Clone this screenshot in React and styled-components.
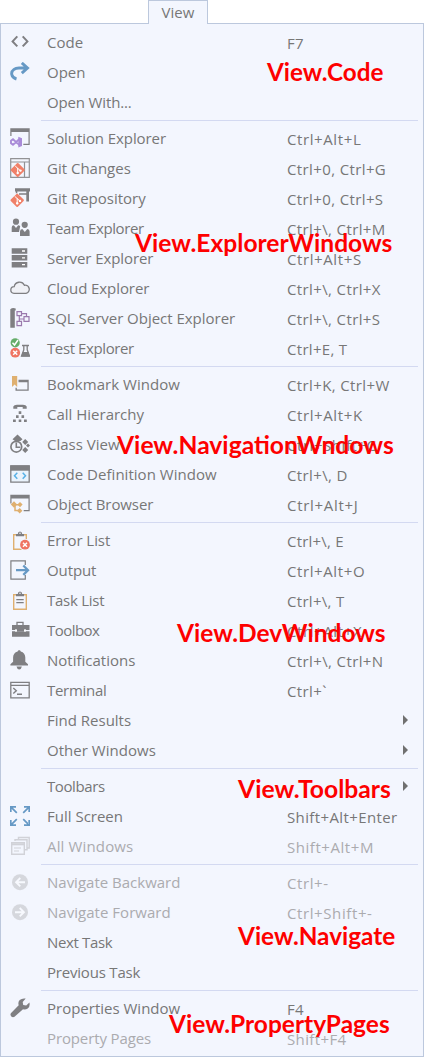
import React from 'react';
import styled, { createGlobalStyle } from 'styled-components';

const Global = createGlobalStyle`
  * { box-sizing: border-box; }
  body { margin: 0; background: #fff; }
`;

const Page = styled.div`
  position: relative;
  width: 424px;
  height: 1057px;
  display: flex;
  flex-direction: column;
  font-family: 'Open Sans', 'Noto Sans', sans-serif;
  font-size: 15px;
  color: #777;
`;

const Tab = styled.div`
  position: relative;
  z-index: 1;
  width: 60px;
  height: 24px;
  margin-left: 148px;
  border: 1px solid #bcc8dd;
  border-bottom: 0;
  background: #f3f6fe;
  line-height: 23px;
  text-align: center;
  flex: none;
`;

const Menu = styled.div`
  flex: 1;
  margin-top: -1px;
  padding: 4px 5px 0 0;
  border: 1px solid #bcc8dd;
  background: #f3f6fe;
`;

const Row = styled.div`
  display: grid;
  grid-template-columns: 46px 240px 1fr 15px;
  height: 30px;
  color: ${(p) => (p.$disabled ? '#ababaf' : '#777')};
`;

const IconCell = styled.span`
  padding: 4px 0 0 9px;
  svg { display: block; opacity: ${(p) => (p.$disabled ? 0.8 : 1)}; }
`;

const Name = styled.span`
  line-height: 29px;
  white-space: nowrap;
  letter-spacing: ${(p) => p.$ls}px;
`;

const Keys = styled.span`
  line-height: 31px;
  white-space: nowrap;
  letter-spacing: ${(p) => p.$ls}px;
`;

const Arrow = styled.i`
  align-self: center;
  margin-top: -2px;
  border: 5px solid transparent;
  border-left: 5px solid #707070;
  border-right: 0;
  width: 0;
`;

const Divider = styled.div`
  height: 1px;
  margin: 2px 0 3px 40px;
  background: #d3d9f1;
`;

const Caption = styled.span`
  position: absolute;
  left: ${(p) => p.$x}px;
  top: ${(p) => p.$base - 24}px;
  font: bold 24.5px/30px Lato, sans-serif;
  color: #fe0000;
  white-space: nowrap;
  transform-origin: 0 0;
  transform: scaleX(${(p) => p.$sx});
`;

const G = '#7f7f82';
const B = '#6699c5';
const O = '#dfb070';
const R = '#ef7463';
const V = '#a98bd8';

const gitMark = (x, y, r) => (
  <g>
    <rect x={x - r * 0.72} y={y - r * 0.72} width={r * 1.44} height={r * 1.44} rx="1" fill="#f08069" transform={`rotate(45 ${x} ${y})`} />
    <path d={`M${x - 2.5} ${y - 4}L${x + 3} ${y + 1}M${x} ${y - 2}V${y + 4}`} stroke="#fff" strokeWidth="1" fill="none" />
    <circle cx={x} cy={y + 3} r="1.2" fill="#fff" />
    <circle cx={x + 2.8} cy={y + 0.6} r="1.2" fill="#fff" />
  </g>
);
const errorMark = (x, y) => (
  <g>
    <circle cx={x} cy={y} r="4.9" fill={R} />
    <path d={`M${x - 2} ${y - 2}l4 4m0 -4l-4 4`} stroke="#fff" strokeWidth="1.5" />
  </g>
);
const clipboard = (
  <g>
    <path d="M3.7 4.7h12.6v14.6H3.7z" fill="none" stroke={O} strokeWidth="1.4" />
    <path d="M6 6.3V4h1.8a2.2 2.6 0 0 1 4.4 0H14v2.3z" fill={G} />
    <circle cx="10" cy="3.2" r=".8" fill="#f3f6fe" />
  </g>
);

const icons = {
  code: <path d="M7.3 4.4L2.6 9.4l4.7 5M12.7 4.4l4.7 5-4.7 5" fill="none" stroke={G} strokeWidth="2" />,
  open: <path d="M6.5 17C.8 15.300.4 10 4 7.400 5.400 6.300 7 6 9 6h8.500M11.800 .9l5.700 5.100-5.700 5.100" fill="none" stroke={B} strokeWidth="2.900" />,
  solution: (
    <g>
      <path d="M.3 .3h19.400v3.700H.3zM.3 4h1.200v4H.3zM18.500 4h1.200v13h-6.400v-1.200h5.200z" fill={G} />
      <path d="M9.500 11L3 16.800 1 15.200v-2.500l2-1.400 6.500 5.800" fill="none" stroke={V} strokeWidth="1.900" />
      <path d="M8.300 8.700l3.700 1.500v7.800l-3.700 1.500z" fill={V} />
    </g>
  ),
  gitChanges: (
    <g>
      <path d="M.7 .7h18.600v18.600H.7zM.7 4h18.600M14.500 4v15" fill="none" stroke="#929295" strokeWidth="1.200" />
      {gitMark(7.7, 12, 7.3)}
    </g>
  ),
  gitRepo: (
    <g>
      <path d="M5 .3h15v3.200H5zM16.300 3.500h2.700v10h-2.700zM5.800 3.500h1.500v1.700H5.800zM9 5.300h8v1.500H9z" fill={G} />
      {gitMark(7.2, 12.3, 7)}
    </g>
  ),
  team: (
    <g fill={G}>
      <circle cx="6" cy="3.700" r="3.100" />
      <path d="M1.700 14V9.500Q1.700 7.300 3.800 7.300L6 10l2.200-2.700q1.300 0 2 1L9 14z" />
      <circle cx="14.700" cy="6.800" r="3.100" />
      <path d="M10 18v-4.500q0-2.500 2.300-2.500l2.500 3 2.500-3q2.300 0 2.300 2.500V18z" />
    </g>
  ),
  server: (
    <g>
      <path d="M1.700 .3h15.600v5.500H1.700zM1.700 7.100h15.600v5.500H1.700zM1.700 13.900h15.600v5.500H1.700z" fill={G} />
      <path d="M12 3h3M12 9.900h3M12 16.700h3" stroke="#fff" strokeWidth="1.300" />
    </g>
  ),
  cloud: <path d="M4 15.300a3.300 3.300 0 0 1 .2-6.600A5.400 5.400 0 0 1 14.400 7.300 4 4 0 0 1 16 15.300z" fill="#f0f1f6" stroke={G} strokeWidth="1.300" />,
  sql: (
    <g>
      <path d="M.3 1.300Q2.500-.8 5.700 .5V2.500H4.800V19.700H.3z" fill={G} />
      <path d="M7 3.700h4.500v4H7zM14 8.700h5v4.600h-5zM7 13.300h4.500v4.400H7zM11.500 5.700h5v3M14 11H9.300V7.700M9.300 11v2.300" fill="none" stroke="#9b7aad" strokeWidth="1.200" />
    </g>
  ),
  test: (
    <g>
      <circle cx="5.200" cy="4.800" r="4.600" fill="#65ad6a" />
      <path d="M2.500 4.800l2 2.200 3.500-5" fill="none" stroke="#fff" strokeWidth="1.500" />
      {errorMark(5.200, 14.700)}
      <path d="M12 7.500h7M13.800 7.500v4.300L11.500 18h8L17.200 11.800V7.500" fill="none" stroke={G} strokeWidth="1.300" />
      <path d="M12.700 14h5.600l1.500 4.600h-8.600z" fill={G} />
    </g>
  ),
  bookmark: (
    <g>
      <path d="M2 2h5.200v11L4.600 10.500 2 13z" fill={O} />
      <path d="M8.500 5.700h10.200v11H5.500v-3h1.300v1.700h10.600V8.300H8.500z" fill={G} />
    </g>
  ),
  call: (
    <g fill={G}>
      <path d="M3.300 4.700V2.500Q4 .7 7 .7h6q3 0 3.700 1.800v2.200h-4V2.900H7.300v1.800z" />
      <path d="M8.700 7.300h2.600v2.600H8.700zM6 11.300h2.600v2.600H6zM11.500 11.300h2.600v2.600h-2.600zM3 15.500h2.800v2.600H3zM8.700 15.500h2.600v2.600H8.700zM14 15.500h2.800v2.600H14z" />
    </g>
  ),
  classView: (
    <g>
      <circle cx="6.300" cy="12.700" r="5.400" fill="none" stroke={G} strokeWidth="1.700" />
      <path d="M6.300 8.500v4.700h4" fill="none" stroke={G} strokeWidth="1.600" />
      <path d="M2.500 5.300L7.500 .5l5 4.800-2 1.700H5zM15.200 5l3 3-3 3-3-3zM15.200 13l3 3-3 3-3-3zM18 9.500l2 2-2 2-2-2z" fill={G} />
    </g>
  ),
  codeDef: (
    <g>
      <path d="M.8 2h18.400v16.200H.8z" fill="#eaf3fc" stroke={G} strokeWidth="1.300" />
      <path d="M.3 1.400h19.400v5.300H.3z" fill={G} />
      <path d="M7.300 8.700L4.500 11.700l2.800 3M12.700 8.700l2.800 3-2.800 3" fill="none" stroke="#58b1e6" strokeWidth="1.500" />
    </g>
  ),
  object: (
    <g>
      <path d="M.3 .7h19.400v3.700H.3zM.3 4.400h1.200v5H.3zM18.500 4.400h1.200v12.800h-6v-1.200h4.800z" fill={G} />
      <path d="M4 7.300l3.200 3.200L4 13.700 .8 10.500zM10 8l2.600 2.600-2.600 2.600-2.600-2.600zM9.700 14l2.700 2.700-2.700 2.700L7 16.700z" fill={O} />
      <path d="M4 10.700h5M5 12v4.600h4" fill="none" stroke={O} strokeWidth="1.500" />
    </g>
  ),
  error: (
    <g>
      {clipboard}
      <circle cx="15" cy="14.700" r="6" fill="#f3f6fe" />
      {errorMark(15, 14.700)}
    </g>
  ),
  output: (
    <g fill="none">
      <path d="M15.300 5V.8H.9v18.400h14.400V15" stroke={G} strokeWidth="1.200" />
      <path d="M6 10.200h12M13.300 5.500l4.700 4.700-4.700 4.700" stroke={B} strokeWidth="2.300" />
    </g>
  ),
  task: (
    <g>
      {clipboard}
      <path d="M6.300 9.600h7.400M6.300 12.600h7.400" stroke={G} strokeWidth="1.400" />
    </g>
  ),
  toolbox: (
    <g>
      <path d="M7 5V2.400h6V5" fill="none" stroke={G} strokeWidth="1.300" />
      <path d="M2 5h17.500v5H2zM2 11.200h17.500v5.500H2z" fill={G} />
      <path d="M7 10.600h7" stroke={G} strokeWidth="1.400" />
      <path d="M6 9v3M15 9v3" stroke="#fff" strokeWidth="1.200" />
    </g>
  ),
  bell: <path d="M9.200 .2c1 0 1.500.6 1.500 1.300 3 .8 4.600 3.100 4.600 6v4.200l2.700 2.600v1.200H.4v-1.200l2.700-2.600V7.500c0-2.900 1.600-5.200 4.600-6 0-.7.5-1.300 1.500-1.300zM6.500 16.600h5.400q-.6 2.800-2.700 2.800t-2.700-2.800z" fill={G} />,
  terminal: (
    <g fill="none" stroke={G}>
      <path d="M.8 2.400h18.400v15.400H.8zM.8 5.300h18.400" strokeWidth="1.300" />
      <path d="M3.300 8l3 2.700-3 2.700M7 14.300h5" strokeWidth="1.400" />
    </g>
  ),
  full: <path d="M.8 6V.8H6M.8 .8l6 6M14 .8h5.200V6M19.200 .8l-6 6M.8 14v5.200H6M.8 19.200l6-6M14 19.200h5.200V14M19.200 19.200l-6-6" fill="none" stroke={B} strokeWidth="1.700" />,
  all: (
    <g fill="none" stroke="#c9cacf">
      <path d="M5 5V3.800h12v10h-2M8.500 3.500V1.500h10.700V12H17" strokeWidth="1.400" />
      <path d="M1.700 6.800h12.600v11.500H1.700z" strokeWidth="1.400" />
      <path d="M1.700 8.300h12.600" strokeWidth="2" />
      <path d="M4 12h7M4 15h5" />
    </g>
  ),
  back: (
    <g>
      <circle cx="10" cy="10.200" r="8" fill="#ced0d5" />
      <path d="M15 10.200H6.500M10.300 6l-4.200 4.200 4.200 4.200" fill="none" stroke="#f8faff" strokeWidth="1.900" />
    </g>
  ),
  forward: (
    <g>
      <circle cx="10" cy="10.200" r="8" fill="#ced0d5" />
      <path d="M5 10.200h8.500M9.700 6l4.200 4.200-4.200 4.200" fill="none" stroke="#f8faff" strokeWidth="1.900" />
    </g>
  ),
  wrench: <path d="M15.700 .6l-3 3.300.5 3 3 .6 3.200-3q1 4-1.700 6-2.300 1.600-4.700.7l-8.500 7.600q-2 1-3.400-.6-1.300-1.600 0-3.200L8.700 7.200Q7.700 4.300 9.700 2 12 0 15.700 .6z" fill={G} />,
};

// Each entry: label, shortcut, icon, flag, label tracking, shortcut tracking.
const groups = [
  [
    ['Code', 'F7', 'code', '', 0.05],
    ['Open', '', 'open', '', 0],
    ['Open With...', '', null, '', -0.15],
  ],
  [
    ['Solution Explorer', 'Ctrl+Alt+L', 'solution', '', -0.08, 0.6],
    ['Git Changes', 'Ctrl+0, Ctrl+G', 'gitChanges', '', 0],
    ['Git Repository', 'Ctrl+0, Ctrl+S', 'gitRepo', '', 0],
    ['Team Explorer', 'Ctrl+\\, Ctrl+M', 'team', '', -0.37],
    ['Server Explorer', 'Ctrl+Alt+S', 'server', '', -0.08, 0.6],
    ['Cloud Explorer', 'Ctrl+\\, Ctrl+X', 'cloud', '', -0.08],
    ['SQL Server Object Explorer', 'Ctrl+\\, Ctrl+S', 'sql', '', -0.02],
    ['Test Explorer', 'Ctrl+E, T', 'test', '', -0.4, 0.3],
  ],
  [
    ['Bookmark Window', 'Ctrl+K, Ctrl+W', 'bookmark', '', 0.03],
    ['Call Hierarchy', 'Ctrl+Alt+K', 'call', '', 0, 0.6],
    ['Class View', 'Ctrl+Shift+C', 'classView', '', 0, 0.55],
    ['Code Definition Window', 'Ctrl+\\, D', 'codeDef', '', 0.03],
    ['Object Browser', 'Ctrl+Alt+J', 'object', '', -0.1, 0.7],
  ],
  [
    ['Error List', 'Ctrl+\\, E', 'error', '', -0.05, 0.2],
    ['Output', 'Ctrl+Alt+O', 'output', '', -0.1, 0.6],
    ['Task List', 'Ctrl+\\, T', 'task', '', -0.27, 0.3],
    ['Toolbox', 'Ctrl+Alt+X', 'toolbox', '', -0.55, 0.6],
    ['Notifications', 'Ctrl+\\, Ctrl+N', 'bell', '', 0],
    ['Terminal', 'Ctrl+`', 'terminal', '', -0.3],
    ['Find Results', '', null, 'sub', 0],
    ['Other Windows', '', null, 'sub', 0.03],
  ],
  [
    ['Toolbars', '', null, 'sub', -0.4],
    ['Full Screen', 'Shift+Alt+Enter', 'full', '', 0],
    ['All Windows', 'Shift+Alt+M', 'all', 'off', 0.15, 0.55],
  ],
  [
    ['Navigate Backward', 'Ctrl+-', 'back', 'off', 0, 0.6],
    ['Navigate Forward', 'Ctrl+Shift+-', 'forward', 'off', 0.03, 0.6],
    ['Next Task', '', null, '', -0.35],
    ['Previous Task', '', null, '', -0.2],
  ],
  [
    ['Properties Window', 'F4', 'wrench', '', 0],
    ['Property Pages', 'Shift+F4', null, 'off', -0.12],
  ],
];

const captions = [
  ['View.Code', 267, 81, 0.99],
  ['View.ExplorerWindows', 135, 252, 1.004],
  ['View.NavigationWndows', 117, 454, 1.006],
  ['View.DevWindows', 177, 642, 1],
  ['View.Toolbars', 238, 798, 1.008],
  ['View.Navigate', 238, 945, 0.993],
  ['View.PropertyPages', 169, 1033, 1],
];

function MenuItem({ item }) {
  const [name, keys, icon, flag, ls = 0, kls = 0.38] = item;
  const off = flag === 'off';
  return (
    <Row $disabled={off}>
      <IconCell $disabled={off}>
        {icon && <svg width="20" height="20" viewBox="0 0 20 20">{icons[icon]}</svg>}
      </IconCell>
      <Name $ls={ls}>{name}</Name>
      <Keys $ls={kls}>{keys}</Keys>
      {flag === 'sub' && <Arrow />}
    </Row>
  );
}

export default function App() {
  return (
    <Page>
      <Global />
      <Tab>View</Tab>
      <Menu>
        {groups.map((items, i) => (
          <React.Fragment key={i}>
            {i > 0 && <Divider />}
            {items.map((item) => <MenuItem key={item[0]} item={item} />)}
          </React.Fragment>
        ))}
      </Menu>
      {captions.map(([text, x, base, sx]) => (
        <Caption key={text} $x={x} $base={base} $sx={sx}>{text}</Caption>
      ))}
    </Page>
  );
}
